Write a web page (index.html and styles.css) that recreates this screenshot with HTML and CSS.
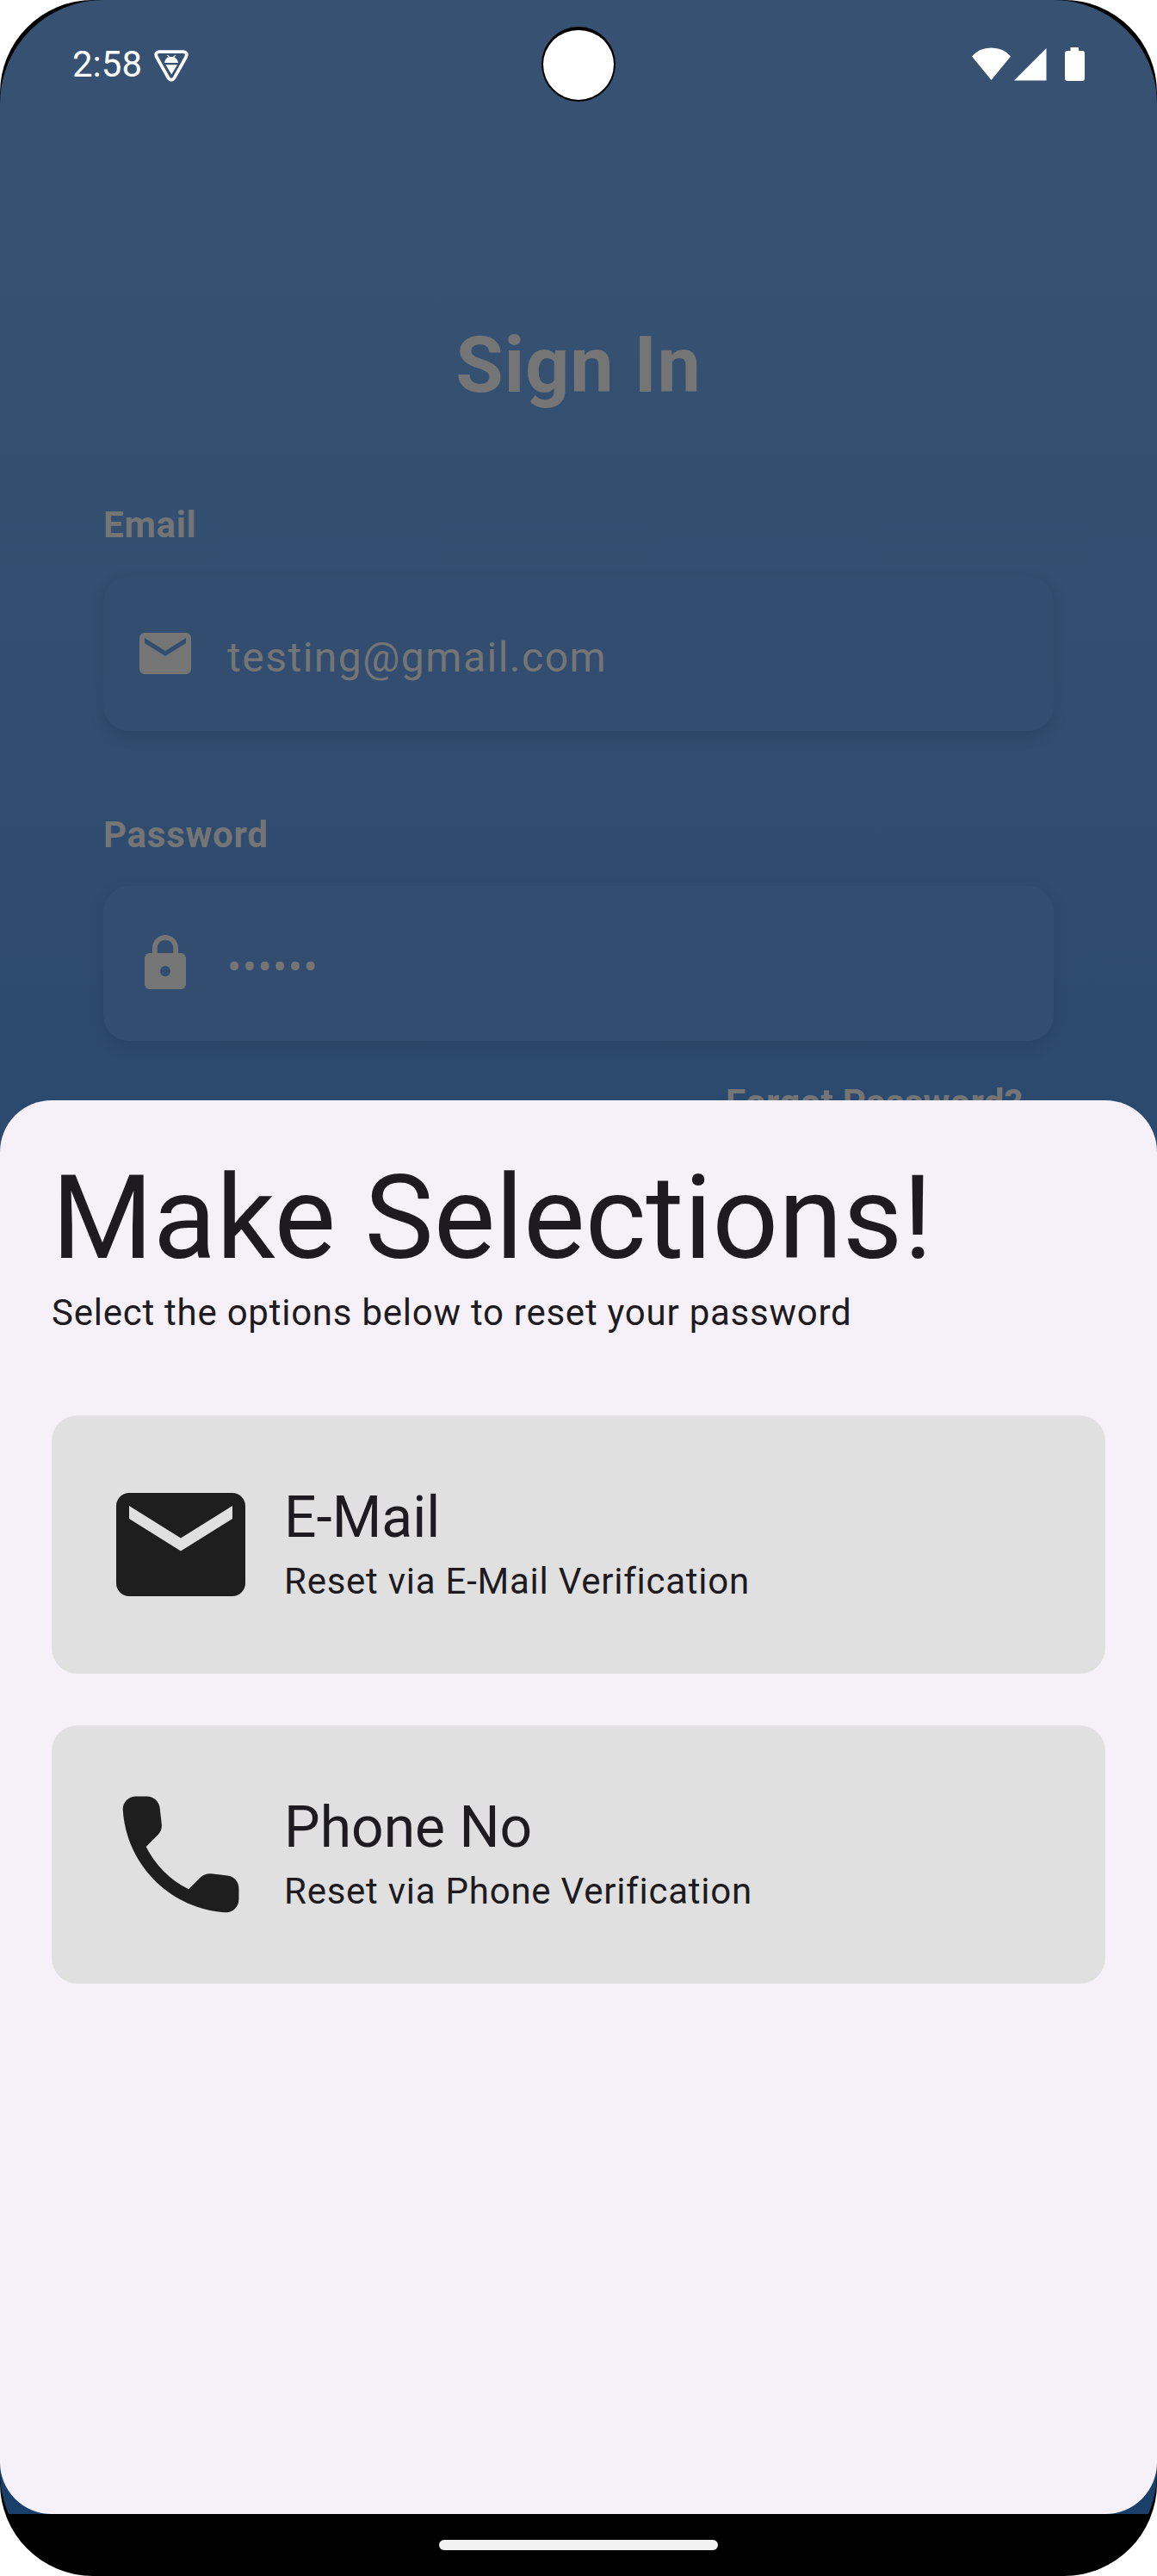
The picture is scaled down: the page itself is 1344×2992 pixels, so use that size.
FILE: index.html
```html
<!DOCTYPE html>
<html lang="en">
<head>
<meta charset="utf-8">
<title>Sign In</title>
<link rel="stylesheet" href="styles.css">
</head>
<body>
<div class="device">
  <div class="face">
    <div class="screen">
      <header class="status">
        <span class="clock">2:58</span>
        <svg class="debug" width="40" height="37" viewBox="0 0 40 37"><path d="M6 2.2H34Q39.500 3 37 8.500L23.500 32.500Q20 37 16.500 32.500L3 8.500Q.5 3 6 2.200Z" fill="none" stroke="#fff" stroke-width="3.800"/><path d="M12 15Q13 9.500 17 8.300L14.800 6.200 16 5.700 18.200 8H21.800L24.500 5.700 25.500 6.200 23.500 8.500Q27 10 28 15ZM13.500 17.300H27L20.200 28.500Z" fill="#fff"/></svg>
        <span class="spacer"></span>
        <svg class="signals" width="132" height="40" viewBox="0 0 132 40"><path fill="#fff" d="M0 10.500Q8 .5 22.500 .5T45 10.500L22.500 38ZM49 38.500 86.500 1V38.500ZM114.500 0H124V4H128Q131 4 131 7V36Q131 39 128 39H111Q108 39 108 36V7Q108 4 111 4H114.500Z"/></svg>
      </header>
      <main class="login">
        <h1>Sign In</h1>
        <label>Email</label>
        <div class="field">
          <svg class="icon" viewBox="0 0 24 24"><path d="M20 4H4c-1.100 0-2 .9-2 2v12c0 1.100.9 2 2 2h16c1.100 0 2-.9 2-2V6c0-1.100-.9-2-2-2zm0 4l-8 5-8-5V6l8 5 8-5z"/></svg>
          <span>testing@gmail.com</span>
        </div>
        <label>Password</label>
        <div class="field">
          <svg class="icon" viewBox="0 0 24 24"><path d="M18 8h-1V6c0-2.760-2.240-5-5-5S7 3.240 7 6v2H6c-1.100 0-2 .9-2 2v10c0 1.100.9 2 2 2h12c1.100 0 2-.9 2-2V10c0-1.100-.9-2-2-2zm-6 9c-1.100 0-2-.9-2-2s.9-2 2-2 2 .9 2 2-.9 2-2 2zm3.100-9H8.900V6c0-1.710 1.390-3.100 3.100-3.100s3.100 1.390 3.100 3.100z"/></svg>
          <span>••••••</span>
        </div>
        <div class="forgot">Forgot Password?</div>
      </main>
      <section class="sheet">
        <h2>Make Selections!</h2>
        <p class="hint">Select the options below to reset your password</p>
        <div class="option">
          <svg class="option-icon" viewBox="0 0 24 24"><path d="M20 4H4c-1.100 0-2 .9-2 2v12c0 1.100.9 2 2 2h16c1.100 0 2-.9 2-2V6c0-1.100-.9-2-2-2zm0 4l-8 5-8-5V6l8 5 8-5z"/></svg>
          <div class="option-text"><h3>E-Mail</h3><p>Reset via E-Mail Verification</p></div>
        </div>
        <div class="option">
          <svg class="option-icon" viewBox="0 0 24 24"><path d="M19.230 15.260l-2.540-.29c-.61-.07-1.210.14-1.640.57l-1.840 1.840c-2.830-1.440-5.150-3.750-6.590-6.590l1.850-1.850c.43-.43.64-1.030.57-1.640l-.29-2.520c-.12-1.010-.97-1.770-1.990-1.770H5.030c-1.130 0-2.070.94-2 2.070.53 8.540 7.360 15.360 15.890 15.890 1.130.07 2.070-.87 2.070-2v-1.730c.01-1.010-.75-1.860-1.760-1.980z"/></svg>
          <div class="option-text"><h3>Phone No</h3><p>Reset via Phone Verification</p></div>
        </div>
      </section>
    </div>
    <nav class="gesture"><span></span></nav>
  </div>
  <div class="camera"></div>
</div>
</body>
</html>
```
FILE: styles.css
```css
* { box-sizing: border-box; }
body { margin: 0; background: #fff; font-family: Roboto, "Liberation Sans", sans-serif; }
h1, h2, h3, p { margin: 0; font-weight: 400; }

.device { position: relative; width: 1344px; height: 2992px; background: #000; border-radius: 108px; overflow: hidden; }
.face { height: 2992px; display: flex; flex-direction: column; border-radius: 120px; overflow: hidden; }
.screen { height: 2920px; display: flex; flex-direction: column;
  background: linear-gradient(#365171 10%, #2d4b6f 40%, #214167 70%, #1a3f69 90%); }

.status { height: 156px; padding: 0 84px; display: flex; align-items: flex-start; color: #fff; }
.clock { font-size: 42px; line-height: 50px; margin-top: 50px; }
.debug { margin: 58px 0 0 14px; }
.spacer { flex: 1; }
.signals { margin-top: 55px; margin-right: -1px; }

.login { height: 1121.500px; padding: 0 120px; color: #757575; font-size: 42px; letter-spacing: .75px; }
.login h1 { margin: 216px 0 107px; font-size: 90px; line-height: 106px; font-weight: 700; text-align: center; }
.login label { display: block; font-weight: 700; line-height: 50px; }
.field { height: 180px; margin: 34px 0 96px; padding-left: 36px; border-radius: 30px; background: #324d70; box-shadow: 0 6px 18px rgba(0, 0, 0, .12);
  display: flex; align-items: center; font-size: 48px; letter-spacing: 1.500px; }
.icon { width: 72px; height: 72px; margin-right: 36px; fill: #757575; }
.field span { line-height: 56px; padding-top: 9px; }
.forgot { margin-top: -49px; padding-right: 36px; text-align: right; font-weight: 700; line-height: 50px; letter-spacing: .3px; }

.sheet { position: relative; flex: 1; background: #f6f1f9; border-radius: 60px; padding: 60px; color: #1d1b20; }
.sheet h2 { font-size: 135px; line-height: 155px; margin-bottom: 2px; }
.hint, .option p { font-size: 42px; line-height: 60px; letter-spacing: .75px; }
.hint { margin-bottom: 89px; }
.option { height: 300px; margin-bottom: 60px; padding-left: 60px; border-radius: 30px; background: #e0e0e0; display: flex; align-items: center; }
.option-icon { width: 180px; height: 180px; margin-right: 30px; fill: #1e1e1e; }
.option-text { padding-top: 2px; }
.option h3 { font-size: 66px; line-height: 82px; margin-bottom: 3px; }

.gesture { height: 72px; background: #000; display: flex; align-items: center; justify-content: center; }
.gesture span { width: 324px; height: 12px; border-radius: 6px; background: #f2f2f2; }
.camera { position: absolute; left: 629px; top: 31px; width: 86px; height: 87px; border-radius: 50%; background: #fff; border: solid #000; border-width: 4px 2px 2px; }
```
